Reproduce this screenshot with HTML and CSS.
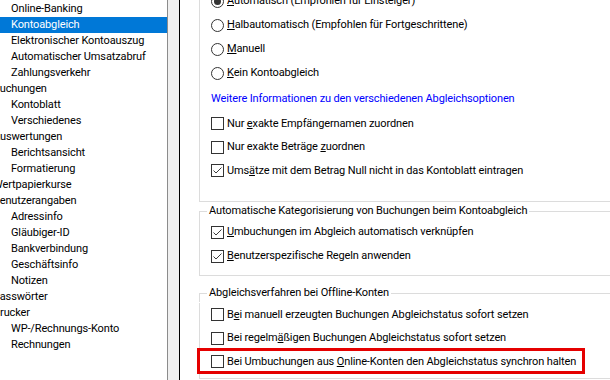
FILE: index.html
```html
<!DOCTYPE html>
<html lang="de">
<head>
<meta charset="utf-8">
<link rel="stylesheet" href="styles.css">
</head>
<body>
<div class="tree">
  <div class="node child">Online-Banking</div>
  <div class="node child selected">Kontoabgleich</div>
  <div class="node child">Elektronischer Kontoauszug</div>
  <div class="node child">Automatischer Umsatzabruf</div>
  <div class="node child">Zahlungsverkehr</div>
  <div class="node parent">Buchungen</div>
  <div class="node child">Kontoblatt</div>
  <div class="node child">Verschiedenes</div>
  <div class="node parent">Auswertungen</div>
  <div class="node child">Berichtsansicht</div>
  <div class="node child">Formatierung</div>
  <div class="node parent">Wertpapierkurse</div>
  <div class="node parent">Benutzerangaben</div>
  <div class="node child">Adressinfo</div>
  <div class="node child">Gläubiger-ID</div>
  <div class="node child">Bankverbindung</div>
  <div class="node child">Geschäftsinfo</div>
  <div class="node child">Notizen</div>
  <div class="node parent">Passwörter</div>
  <div class="node parent">Drucker</div>
  <div class="node child">WP-/Rechnungs-Konto</div>
  <div class="node child">Rechnungen</div>
</div>
<div class="splitter"></div>
<div class="main">
  <div class="group group-top">
    <div class="group-body first">
      <label class="row radio-row">
        <span class="radio checked"></span><span class="label"><u>A</u>utomatisch (Empfohlen für Einsteiger)</span>
      </label>
      <label class="row radio-row">
        <span class="radio"></span><span class="label"><u>H</u>albautomatisch (Empfohlen für Fortgeschrittene)</span>
      </label>
      <label class="row radio-row">
        <span class="radio"></span><span class="label"><u>M</u>anuell</span>
      </label>
      <label class="row radio-row">
        <span class="radio"></span><span class="label"><u>K</u>ein Kontoabgleich</span>
      </label>
      <div class="row link-row"><span class="link">Weitere Informationen zu den verschiedenen Abgleichsoptionen</span></div>
      <label class="row check-row first-check">
        <span class="check"></span><span class="label">Nur <u>e</u>xakte Empfängernamen zuordnen</span>
      </label>
      <label class="row check-row">
        <span class="check"></span><span class="label">Nur exakte Beträge <u>z</u>uordnen</span>
      </label>
      <label class="row check-row">
        <span class="check checked"><svg viewBox="0 0 11 11" width="11" height="11"><polyline points="1.5,5.5 4,8 9.5,2.5" fill="none" stroke="#3c3c3c" stroke-width="1"/></svg></span><span class="label">Ums<u>ä</u>tze mit dem Betrag Null nicht in das Kontoblatt eintragen</span>
      </label>
    </div>
  </div>

  <div class="group group-cat">
    <div class="group-title"><span class="title-text">Automatische Kategorisierung von Buchungen beim Kontoabgleich</span></div>
    <div class="group-body">
      <label class="row wide-row">
        <span class="check checked"><svg viewBox="0 0 11 11" width="11" height="11"><polyline points="1.5,5.5 4,8 9.5,2.5" fill="none" stroke="#3c3c3c" stroke-width="1"/></svg></span><span class="label"><u>U</u>mbuchungen im Abgleich automatisch verknüpfen</span>
      </label>
      <label class="row wide-row">
        <span class="check checked"><svg viewBox="0 0 11 11" width="11" height="11"><polyline points="1.5,5.5 4,8 9.5,2.5" fill="none" stroke="#3c3c3c" stroke-width="1"/></svg></span><span class="label"><u>B</u>enutzerspezifische Regeln anwenden</span>
      </label>
    </div>
  </div>

  <div class="group group-offline">
    <div class="group-title"><span class="title-text">Abgleichsverfahren bei Offline-Konten</span></div>
    <div class="group-body">
      <label class="row check-row first-offline">
        <span class="check"></span><span class="label">B<u>e</u>i manuell erzeugten Buchungen Abgleichstatus sofort setzen</span>
      </label>
      <label class="row check-row">
        <span class="check"></span><span class="label">Bei regelm<u>ä</u>ßigen Buchungen Abgleichstatus sofort setzen</span>
      </label>
      <label class="row check-row highlighted">
        <span class="check"></span><span class="label">Bei Umbuchungen aus <u>O</u>nline-Konten den Abgleichstatus synchron halten</span>
      </label>
    </div>
  </div>
</div>
</body>
</html>
```
FILE: styles.css
```css
html, body {
  margin: 0;
  padding: 0;
  width: 610px;
  height: 380px;
  overflow: hidden;
  background: #ffffff;
}

body {
  display: flex;
  font-family: Roboto, "Liberation Sans", sans-serif;
  font-size: 11px;
  letter-spacing: -0.13px;
  color: #000000;
}

/* ---------- tree ---------- */
.tree {
  width: 167px;
  flex: none;
  padding-top: 1px;
  overflow: hidden;
  background: #ffffff;
}

.node {
  height: 16px;
  line-height: 16px;
  white-space: nowrap;
}

.node.child {
  padding-left: 11px;
}

.node.parent {
  text-indent: -7px;
}

.node.selected {
  background: #0078d7;
  color: #ffffff;
}

/* ---------- splitter ---------- */
.splitter {
  flex: none;
  width: 11px;
  background: #f0f0f0;
  border-left: 1px solid #8c8c8c;
  border-right: 1px solid #000000;
}

/* ---------- main ---------- */
.main {
  flex: 1;
  min-width: 0;
  overflow: hidden;
  background: #ffffff;
}

.group {
  margin-left: 19px;
  margin-right: -40px;
}

.group-body {
  border: 1px solid #dcdcdc;
  border-top: none;
  padding-left: 11px;
}

.group-top {
  margin-top: -30px;
}

.group-top .group-body {
  border-top: 1px solid #dcdcdc;
  padding-top: 18px;
  padding-bottom: 18.5px;
}

.group-title {
  display: flex;
  height: 18px;
}

.group-title::before,
.group-title::after {
  content: "";
  margin-top: 9px;
  border-top: 1px solid #dcdcdc;
}

.group-title::before {
  width: 7px;
  border-left: 1px solid #dcdcdc;
}

.group-title::after {
  flex: 1;
  border-right: 1px solid #dcdcdc;
}

.title-text {
  line-height: 18px;
  padding: 0 2px;
  white-space: nowrap;
}

.group-cat .group-body {
  padding-bottom: 7px;
}

.group-offline {
  margin-top: 8px;
}

.group-offline .group-body {
  padding-bottom: 4.5px;
}

/* ---------- rows ---------- */
.row {
  display: flex;
  align-items: center;
  white-space: nowrap;
}

.radio-row,
.wide-row {
  height: 24px;
}

.link-row {
  height: 24px;
  margin-top: 1px;
}

.check-row {
  height: 23.5px;
}

.first-check {
  margin-top: 2px;
}

.first-offline {
  margin-top: 1px;
}

.label {
  margin-left: 3px;
  line-height: 14px;
}

.label u {
  text-decoration-thickness: 1px;
  text-underline-offset: 1px;
}

.link {
  color: #0000ff;
}

/* radio */
.radio {
  flex: none;
  width: 13px;
  height: 13px;
  box-sizing: border-box;
  border: 1px solid #333333;
  border-radius: 50%;
  background: #ffffff;
  display: flex;
  align-items: center;
  justify-content: center;
}

.radio.checked::after {
  content: "";
  width: 7px;
  height: 7px;
  border-radius: 50%;
  background: #333333;
}

/* checkbox */
.check {
  flex: none;
  width: 13px;
  height: 13px;
  box-sizing: border-box;
  border: 1px solid #333333;
  background: #ffffff;
  display: flex;
  align-items: center;
  justify-content: center;
}

.check svg {
  display: block;
}

/* red annotation frame */
.highlighted {
  position: relative;
}

.highlighted::after {
  content: "";
  position: absolute;
  left: -14px;
  top: -2px;
  width: 388px;
  height: 26px;
  box-sizing: border-box;
  border: 3px solid #e50000;
  pointer-events: none;
}
```
